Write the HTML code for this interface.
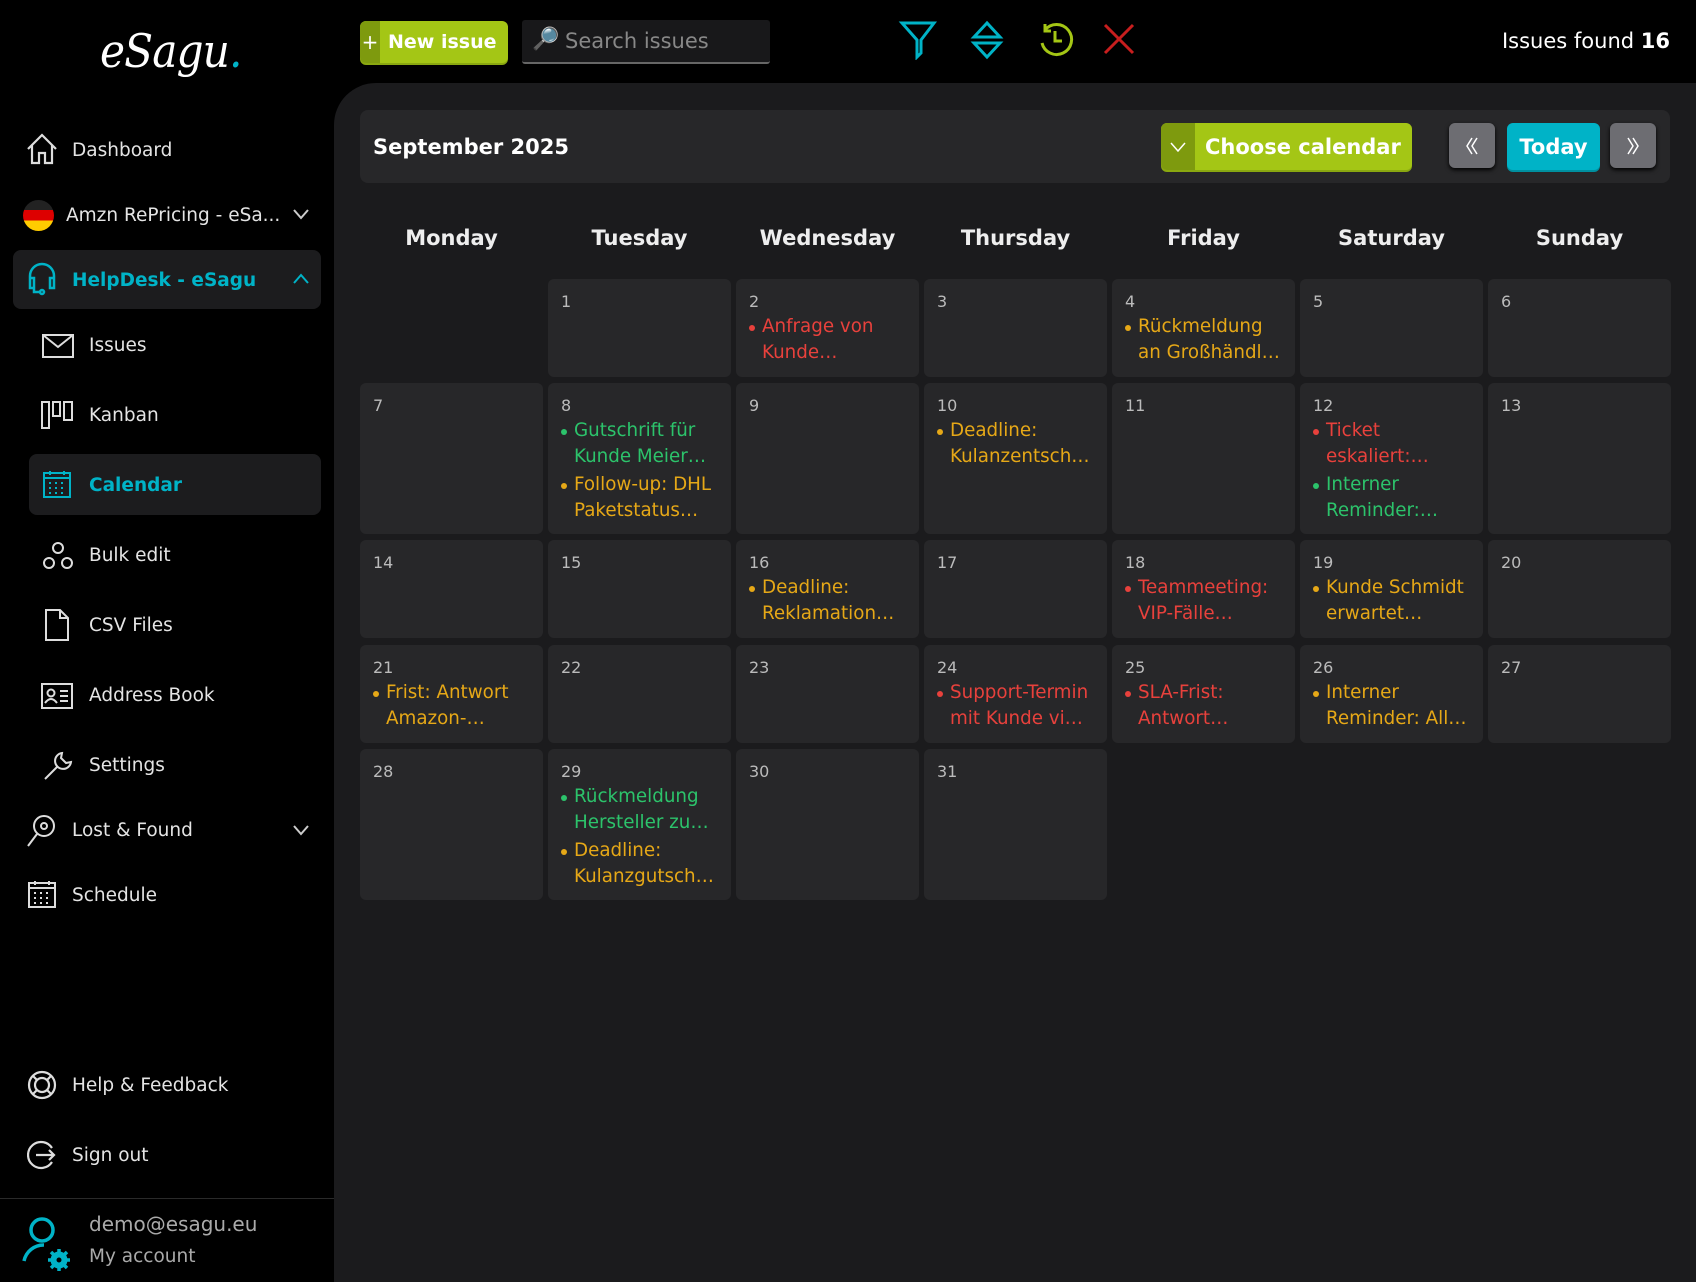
<!DOCTYPE html>
<html><head><meta charset="utf-8"><style>
*{box-sizing:border-box;margin:0;padding:0}
body{width:1696px;height:1282px;background:#000;font-family:"DejaVu Sans","Liberation Sans",sans-serif;color:#ddd;position:relative;overflow:hidden}
.a{position:absolute}
.nav{position:absolute;font-size:18.5px;color:#e4e4e4;display:flex;align-items:center;height:40px}
.nav svg{position:absolute}
.main{position:absolute;left:334px;top:83px;width:1362px;height:1199px;background:#1b1b1d;border-top-left-radius:42px}
.dh{position:absolute;top:226px;width:183px;text-align:center;font-weight:bold;font-size:21px;color:#eee}
.c{position:absolute;width:183px;background:#272729;border-radius:6px;padding:13px 10px 0 13px}
.n{font-size:16px;color:#bbb;line-height:20px}
.e{position:relative;font-size:18.3px;line-height:26px;padding-left:13px;margin-top:2px}
.e:before{content:"";position:absolute;left:0;top:11px;width:6px;height:6px;border-radius:50%;background:currentColor}
.r{color:#e8413c}.y{color:#e6a817}.g{color:#2cc36b}
.btn{position:absolute;border-radius:6px;font-weight:bold;color:#fff;display:flex;align-items:center;justify-content:center}
</style></head><body>
<div class="a" style="left:100px;top:24px;font-family:'DejaVu Serif',serif;font-style:italic;font-size:46px;color:#fff;font-weight:200;letter-spacing:-1px;transform:scaleX(0.92);transform-origin:left">eSagu<span style="color:#00b3c7">.</span></div>
<div class="btn" style="left:360px;top:21px;width:148px;height:42px;background:#a4c615;border-radius:6px;justify-content:flex-start;box-shadow:0 2px 0 #8aa810"><span style="width:20px;height:100%;background:#7e9a0e;border-radius:6px 0 0 6px;display:flex;align-items:center;justify-content:center;font-weight:normal;font-size:20px">+</span><span style="margin-left:8px;font-size:19px">New issue</span></div>
<div class="a" style="left:522px;top:20px;width:248px;height:44px;background:#18181a;border-bottom:2px solid #666;border-radius:3px"><span style="position:absolute;left:10px;top:7px;font-size:22px">🔎</span><span style="position:absolute;left:43px;top:9px;font-size:21px;color:#888">Search issues</span></div>
<svg class="a" style="left:898px;top:20px" width="40" height="40" viewBox="0 0 40 40" fill="none" stroke="#00b3c7" stroke-width="3"><path d="M4 3H36L23 20V33L19 37V20Z"/></svg>
<svg class="a" style="left:970px;top:20px" width="34" height="40" viewBox="0 0 34 40" fill="none" stroke="#00b3c7" stroke-width="3"><path d="M17 3L4 17H30Z M4 23H30L17 37Z"/></svg>
<svg class="a" style="left:1037px;top:21px" width="38" height="38" viewBox="0 0 38 38" fill="none" stroke="#a4c615" stroke-width="3"><path d="M8 9A15 15 0 1 1 5 22M8 3V10H14M18 10V20H25"/></svg>
<svg class="a" style="left:1102px;top:22px" width="34" height="34" viewBox="0 0 34 34" stroke="#c81e1e" stroke-width="3"><path d="M3 3L31 31M31 3L3 31"/></svg>
<div class="a" style="right:26px;top:29px;font-size:21px;color:#fff">Issues found <b>16</b></div>
<div class="a" style="left:13px;top:250px;width:308px;height:59px;background:#1c1c1e;border-radius:8px"></div>
<div class="a" style="left:29px;top:454px;width:292px;height:61px;background:#1c1c1e;border-radius:8px"></div>
<div class="nav" style="left:72px;top:130px">Dashboard</div>
<svg class="a" style="left:25px;top:132px" width="34" height="34" viewBox="0 0 34 34" fill="none" stroke="#ddd" stroke-width="2.2"><path d="M3 17L17 3L31 17M7 13V31H14V21H20V31H27V13"/></svg>
<div class="a" style="left:23px;top:200px;width:31px;height:31px;border-radius:50%;background:linear-gradient(#222 0 33%,#d00 33% 66%,#fc0 66%)"></div>
<div class="nav" style="left:66px;top:195px">Amzn RePricing - eSa...</div>
<svg class="a" style="left:292px;top:208px" width="18" height="12" viewBox="0 0 18 12" fill="none" stroke="#ccc" stroke-width="2"><path d="M2 2L9 10L16 2"/></svg>
<svg class="a" style="left:27px;top:262px" width="30" height="34" viewBox="0 0 30 34" fill="none" stroke="#00b3c7" stroke-width="2.5"><path d="M3 22V14A12 12 0 0 1 27 14V22M3 16H7V26H3ZM23 16H27V26H23ZM7 26V30H13"/><circle cx="15" cy="30" r="2"/></svg>
<div class="nav" style="left:72px;top:260px;color:#00b3c7;font-weight:bold">HelpDesk - eSagu</div>
<svg class="a" style="left:292px;top:273px" width="18" height="12" viewBox="0 0 18 12" fill="none" stroke="#00b3c7" stroke-width="2"><path d="M2 10L9 2L16 10"/></svg>
<svg class="a" style="left:42px;top:334px" width="32" height="24" viewBox="0 0 32 24" fill="none" stroke="#ddd" stroke-width="2"><rect x="1" y="1" width="30" height="22"/><path d="M1 1L16 13L31 1"/></svg>
<div class="nav" style="left:89px;top:325px">Issues</div>
<svg class="a" style="left:41px;top:401px" width="32" height="28" viewBox="0 0 32 28" fill="none" stroke="#ddd" stroke-width="2"><rect x="1" y="1" width="7" height="26"/><rect x="12" y="1" width="7" height="14"/><rect x="23" y="1" width="8" height="18"/></svg>
<div class="nav" style="left:89px;top:395px">Kanban</div>
<svg class="a" style="left:43px;top:470px" width="28" height="28" viewBox="0 0 28 28" fill="none" stroke="#00b3c7" stroke-width="2"><rect x="1" y="3" width="26" height="24"/><path d="M1 8H27M7 1V5M21 1V5" /><path d="M6 13h2M12 13h2M18 13h2M6 18h2M12 18h2M18 18h2M6 23h2M12 23h2M18 23h2" stroke-width="2"/></svg>
<div class="nav" style="left:89px;top:465px;color:#00b3c7;font-weight:bold">Calendar</div>
<svg class="a" style="left:42px;top:541px" width="32" height="30" viewBox="0 0 32 30" fill="none" stroke="#ddd" stroke-width="2"><circle cx="16" cy="7" r="5"/><circle cx="7" cy="22" r="5"/><circle cx="25" cy="22" r="5"/></svg>
<div class="nav" style="left:89px;top:535px">Bulk edit</div>
<svg class="a" style="left:45px;top:609px" width="24" height="32" viewBox="0 0 24 32" fill="none" stroke="#ddd" stroke-width="2"><path d="M1 1H15L23 9V31H1ZM15 1V9H23"/></svg>
<div class="nav" style="left:89px;top:605px">CSV Files</div>
<svg class="a" style="left:41px;top:683px" width="32" height="26" viewBox="0 0 32 26" fill="none" stroke="#ddd" stroke-width="2"><rect x="1" y="1" width="30" height="24"/><circle cx="10" cy="10" r="3.5"/><path d="M4 20Q10 12 16 20M19 8H27M19 13H27M19 18H27"/></svg>
<div class="nav" style="left:89px;top:675px">Address Book</div>
<svg class="a" style="left:42px;top:750px" width="32" height="32" viewBox="0 0 32 32" fill="none" stroke="#ddd" stroke-width="2"><path d="M3 29L16 16M20 3A8 8 0 1 0 29 12L24 13L19 8Z"/></svg>
<div class="nav" style="left:89px;top:745px">Settings</div>
<svg class="a" style="left:26px;top:814px" width="32" height="34" viewBox="0 0 32 34" fill="none" stroke="#ddd" stroke-width="2"><circle cx="18" cy="12" r="10"/><circle cx="18" cy="12" r="3"/><path d="M11 20L2 32"/></svg>
<div class="nav" style="left:72px;top:810px">Lost &amp; Found</div>
<svg class="a" style="left:292px;top:824px" width="18" height="12" viewBox="0 0 18 12" fill="none" stroke="#ccc" stroke-width="2"><path d="M2 2L9 10L16 2"/></svg>
<svg class="a" style="left:28px;top:880px" width="28" height="28" viewBox="0 0 28 28" fill="none" stroke="#ddd" stroke-width="2"><rect x="1" y="3" width="26" height="24"/><path d="M1 8H27M7 1V5M21 1V5M6 13h2M12 13h2M18 13h2M6 18h2M12 18h2M18 18h2M6 23h2M12 23h2M18 23h2"/></svg>
<div class="nav" style="left:72px;top:875px">Schedule</div>
<svg class="a" style="left:27px;top:1070px" width="30" height="30" viewBox="0 0 30 30" fill="none" stroke="#ddd" stroke-width="2.2"><circle cx="15" cy="15" r="13"/><circle cx="15" cy="15" r="7"/><path d="M6 6L10 10M24 6L20 10M6 24L10 20M24 24L20 20"/></svg>
<div class="nav" style="left:72px;top:1065px">Help &amp; Feedback</div>
<svg class="a" style="left:27px;top:1140px" width="30" height="30" viewBox="0 0 30 30" fill="none" stroke="#ddd" stroke-width="2.2"><path d="M25 8A13 13 0 1 0 25 22M9 15H27M22 10L27 15L22 20"/></svg>
<div class="nav" style="left:72px;top:1135px">Sign out</div>
<div class="a" style="left:0;top:1198px;width:334px;height:1px;background:#2a2a2a"></div>
<svg class="a" style="left:20px;top:1216px" width="56" height="58" viewBox="0 0 56 58" fill="none" stroke="#00b3c7" stroke-width="3.5"><circle cx="22" cy="14" r="11"/><path d="M4 45A20 20 0 0 1 24 29"/><circle cx="39" cy="44" r="6" stroke-width="5"/><path d="M39 33V55M28 44H50M31 36L47 52M47 36L31 52" stroke-width="3.5"/><circle cx="39" cy="44" r="2.5" fill="#000" stroke="none"/></svg>
<div class="a" style="left:89px;top:1212px;font-size:20px;color:#aaa">demo@esagu.eu</div>
<div class="a" style="left:89px;top:1246px;font-size:18.5px;color:#aaa">My account</div>
<div class="main"></div>
<div class="a" style="left:360px;top:110px;width:1310px;height:73px;background:#272729;border-radius:8px"></div>
<div class="a" style="left:373px;top:135px;font-size:21px;font-weight:bold;color:#fff">September 2025</div>
<div class="btn" style="left:1161px;top:123px;width:251px;height:47px;background:#a4c615;justify-content:flex-start;box-shadow:0 2px 0 #8aa810"><span style="width:34px;height:100%;background:#7e9a0e;border-radius:6px 0 0 6px;display:flex;align-items:center;justify-content:center"><svg width="16" height="10" viewBox="0 0 16 10" fill="none" stroke="#fff" stroke-width="1.5"><path d="M1 1L8 9L15 1"/></svg></span><span style="margin-left:10px;font-size:21px">Choose calendar</span></div>
<div class="btn" style="left:1449px;top:123px;width:46px;height:45px;background:#6d6d72;box-shadow:0 2px 4px #000"><svg width="16" height="20" viewBox="0 0 16 20" fill="none" stroke="#fff" stroke-width="1.5"><path d="M8 2L3 10L8 18M13 2L8 10L13 18"/></svg></div>
<div class="btn" style="left:1507px;top:123px;width:93px;height:47px;background:#00b3c7;font-size:21px;box-shadow:0 2px 0 #0090a0">Today</div>
<div class="btn" style="left:1610px;top:123px;width:46px;height:45px;background:#6d6d72;box-shadow:0 2px 4px #000"><svg width="16" height="20" viewBox="0 0 16 20" fill="none" stroke="#fff" stroke-width="1.5"><path d="M3 2L8 10L3 18M8 2L13 10L8 18"/></svg></div>
<div class="dh" style="left:360px">Monday</div>
<div class="dh" style="left:548px">Tuesday</div>
<div class="dh" style="left:736px">Wednesday</div>
<div class="dh" style="left:924px">Thursday</div>
<div class="dh" style="left:1112px">Friday</div>
<div class="dh" style="left:1300px">Saturday</div>
<div class="dh" style="left:1488px">Sunday</div>
<div class="c" style="left:548px;top:279px;height:98px"><div class="n">1</div></div>
<div class="c" style="left:736px;top:279px;height:98px"><div class="n">2</div><div class="e r">Anfrage von Kunde…</div></div>
<div class="c" style="left:924px;top:279px;height:98px"><div class="n">3</div></div>
<div class="c" style="left:1112px;top:279px;height:98px"><div class="n">4</div><div class="e y">Rückmeldung<br>an Großhändl…</div></div>
<div class="c" style="left:1300px;top:279px;height:98px"><div class="n">5</div></div>
<div class="c" style="left:1488px;top:279px;height:98px"><div class="n">6</div></div>
<div class="c" style="left:360px;top:383px;height:151px"><div class="n">7</div></div>
<div class="c" style="left:548px;top:383px;height:151px"><div class="n">8</div><div class="e g">Gutschrift für Kunde Meier…</div><div class="e y">Follow-up: DHL Paketstatus…</div></div>
<div class="c" style="left:736px;top:383px;height:151px"><div class="n">9</div></div>
<div class="c" style="left:924px;top:383px;height:151px"><div class="n">10</div><div class="e y">Deadline:<br>Kulanzentsch…</div></div>
<div class="c" style="left:1112px;top:383px;height:151px"><div class="n">11</div></div>
<div class="c" style="left:1300px;top:383px;height:151px"><div class="n">12</div><div class="e r">Ticket eskaliert:…</div><div class="e g">Interner Reminder:…</div></div>
<div class="c" style="left:1488px;top:383px;height:151px"><div class="n">13</div></div>
<div class="c" style="left:360px;top:540px;height:98px"><div class="n">14</div></div>
<div class="c" style="left:548px;top:540px;height:98px"><div class="n">15</div></div>
<div class="c" style="left:736px;top:540px;height:98px"><div class="n">16</div><div class="e y">Deadline:<br>Reklamation…</div></div>
<div class="c" style="left:924px;top:540px;height:98px"><div class="n">17</div></div>
<div class="c" style="left:1112px;top:540px;height:98px"><div class="n">18</div><div class="e r">Teammeeting:<br>VIP-Fälle…</div></div>
<div class="c" style="left:1300px;top:540px;height:98px"><div class="n">19</div><div class="e y" style="white-space:nowrap">Kunde Schmidt<br>erwartet…</div></div>
<div class="c" style="left:1488px;top:540px;height:98px"><div class="n">20</div></div>
<div class="c" style="left:360px;top:645px;height:98px"><div class="n">21</div><div class="e y">Frist: Antwort<br>Amazon-…</div></div>
<div class="c" style="left:548px;top:645px;height:98px"><div class="n">22</div></div>
<div class="c" style="left:736px;top:645px;height:98px"><div class="n">23</div></div>
<div class="c" style="left:924px;top:645px;height:98px"><div class="n">24</div><div class="e r" style="white-space:nowrap">Support-Termin<br>mit Kunde vi…</div></div>
<div class="c" style="left:1112px;top:645px;height:98px"><div class="n">25</div><div class="e r">SLA-Frist:<br>Antwort…</div></div>
<div class="c" style="left:1300px;top:645px;height:98px"><div class="n">26</div><div class="e y" style="white-space:nowrap">Interner<br>Reminder: All…</div></div>
<div class="c" style="left:1488px;top:645px;height:98px"><div class="n">27</div></div>
<div class="c" style="left:360px;top:749px;height:151px"><div class="n">28</div></div>
<div class="c" style="left:548px;top:749px;height:151px"><div class="n">29</div><div class="e g" style="white-space:nowrap">Rückmeldung<br>Hersteller zu…</div><div class="e y" style="white-space:nowrap">Deadline:<br>Kulanzgutsch…</div></div>
<div class="c" style="left:736px;top:749px;height:151px"><div class="n">30</div></div>
<div class="c" style="left:924px;top:749px;height:151px"><div class="n">31</div></div>
</body></html>
